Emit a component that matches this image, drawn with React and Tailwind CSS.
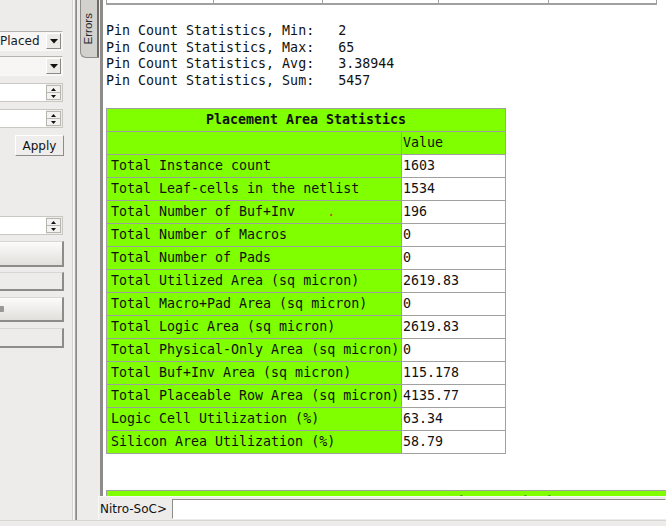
import React from "react";

const mono = { fontFamily: '"DejaVu Sans Mono", "Liberation Mono", monospace' };

const rows = [
  ["Total Instance count", "1603"],
  ["Total Leaf-cells in the netlist", "1534"],
  ["Total Number of Buf+Inv", "196", true],
  ["Total Number of Macros", "0"],
  ["Total Number of Pads", "0"],
  ["Total Utilized Area (sq micron)", "2619.83"],
  ["Total Macro+Pad Area (sq micron)", "0"],
  ["Total Logic Area (sq micron)", "2619.83"],
  ["Total Physical-Only Area (sq micron)", "0"],
  ["Total Buf+Inv Area (sq micron)", "115.178"],
  ["Total Placeable Row Area (sq micron)", "4135.77"],
  ["Logic Cell Utilization (%)", "63.34"],
  ["Silicon Area Utilization (%)", "58.79"],
];

function DownArrow() {
  return (
    <svg width="8" height="5" viewBox="0 0 8 5">
      <path d="M0 0 H8 L4 4.5 Z" fill="#111" />
    </svg>
  );
}

function Combo({ text }) {
  return (
    <div className="flex h-[20px] w-[63px] items-center border border-l-0 border-t-[#b5b3ae] border-r-[#f8f8f7] border-b-[#f8f8f7] bg-[#f7f6f5]">
      <div className="flex-1 overflow-hidden whitespace-nowrap pl-0 text-[12px] leading-none text-[#1a1a1a] [direction:rtl] text-left">
        <span className="[direction:ltr]">{text}</span>
      </div>
      <div className="mr-[1px] flex h-[16px] w-[15px] items-center justify-center border border-t-white border-l-white border-r-[#8c8a86] border-b-[#8c8a86] bg-[#ebeae7]">
        <DownArrow />
      </div>
    </div>
  );
}

function Spin() {
  return (
    <div className="flex h-[19px] w-[63px] items-stretch border border-l-0 border-[#c9c7c2] bg-white">
      <div className="flex-1" />
      <div className="flex w-[16px] flex-col bg-[#edeceb] py-[1px] pr-[1px]">
        <div className="flex flex-1 items-center justify-center border border-[#b8b6b1] bg-[#f3f2f0]">
          <svg width="5" height="3" viewBox="0 0 5 3"><path d="M0 3 L2.5 0 L5 3 Z" fill="#111" /></svg>
        </div>
        <div className="flex flex-1 items-center justify-center border border-t-0 border-[#b8b6b1] bg-[#f3f2f0]">
          <svg width="5" height="3" viewBox="0 0 5 3"><path d="M0 0 H5 L2.5 3 Z" fill="#111" /></svg>
        </div>
      </div>
    </div>
  );
}

function BigButton({ h, grad, icon }) {
  return (
    <div
      className={`flex w-[64px] items-center border-t border-t-[#d8d6d1] border-r-2 border-b-2 border-r-[#8e8c88] border-b-[#8e8c88] ${h} ${
        grad ? "bg-gradient-to-b from-[#fbfbfa] to-[#e2e0dc]" : "bg-[#edeceb]"
      }`}
    >
      {icon && <div className="h-[6px] w-[4px] rounded-r-[1px] bg-[#9a9894]" />}
    </div>
  );
}

export default function App() {
  return (
    <div
      className="flex h-[526px] w-[666px] flex-col overflow-hidden bg-[#edeceb]"
      style={{ fontFamily: '"DejaVu Sans", "Liberation Sans", sans-serif' }}
    >
      <div className="flex h-[520px]">
        {/* left panel */}
        <div className="flex w-[72px] flex-col overflow-hidden">
          <div className="h-[31px]" />
          <Combo text="Placed" />
          <div className="h-[5px]" />
          <Combo text="" />
          <div className="h-[7px]" />
          <Spin />
          <div className="h-[7px]" />
          <Spin />
          <div className="h-[7px]" />
          <div className="ml-[15px] flex h-[21px] w-[49px] items-center justify-center border border-t-white border-l-white border-r-[#8e8c88] border-b-[#8e8c88] bg-[#efeeec] text-[12px] text-[#111]">
            Apply
          </div>
          <div className="h-[60px]" />
          <Spin />
          <div className="h-[6px]" />
          <BigButton h="h-[26px]" grad />
          <div className="h-[5px]" />
          <BigButton h="h-[19px]" />
          <div className="h-[6px]" />
          <BigButton h="h-[25px]" grad icon />
          <div className="h-[6px]" />
          <BigButton h="h-[20px]" />
        </div>
        {/* separator */}
        <div className="flex w-[6px]">
          <div className="w-[1px] bg-[#d4d2ce]" />
          <div className="w-[1px] bg-[#fbfbfa]" />
          <div className="w-[1px]" />
          <div className="w-[1px] bg-[#a8a6a2]" />
          <div className="w-[1px] bg-[#8e8c88]" />
        </div>
        {/* right area */}
        <div className="flex min-w-0 flex-1 flex-col">
          <div className="flex h-[496px]">
            {/* tab column */}
            <div className="flex w-[22px] flex-col">
              <div className="ml-[2px] flex h-[58px] w-[19px] items-center justify-center rounded-bl-[6px] border border-r-2 border-[#8e8c88] border-t-0 border-r-[#6e6c68] bg-[#d3d1cd]">
                <span
                  className="inline-block -rotate-90 whitespace-nowrap text-[11.5px] leading-none text-[#2a2a2a]"
                  style={{ fontFamily: '"Liberation Sans", sans-serif' }}
                >
                  Errors
                </span>
              </div>
            </div>
            {/* content frame */}
            <div className="min-w-0 flex-1 overflow-hidden border-l-[3px] border-l-[#8e8c88] bg-white pl-[3px]" style={mono}>
              {/* scrolled table bottom */}
              <div className="flex h-[5px] w-[551px] border-b-2 border-x border-[#a0a0a0]">
                <div className="w-[107px] border-r border-[#a0a0a0]" />
                <div className="w-[109px] border-r border-[#a0a0a0]" />
                <div className="w-[116px] border-r border-[#a0a0a0]" />
                <div className="w-[110px] border-r border-[#a0a0a0]" />
                <div className="flex-1" />
              </div>
              <div className="pt-[18px] text-[13.3px] leading-[16.67px] text-[#111] whitespace-pre">
                <div>{"Pin Count Statistics, Min:   2"}</div>
                <div>{"Pin Count Statistics, Max:   65"}</div>
                <div>{"Pin Count Statistics, Avg:   3.38944"}</div>
                <div>{"Pin Count Statistics, Sum:   5457"}</div>
              </div>
              <div className="h-[18px]" />
              <table className="w-[400px] border-collapse border border-[#8a8a8a] text-[13.3px] text-[#111]">
                <tbody>
                  <tr className="h-[23px]">
                    <td colSpan={2} className="border border-[#a0a0a0] bg-[#7fff00] p-0 text-center font-bold leading-[21px]">
                      Placement Area Statistics
                    </td>
                  </tr>
                  <tr className="h-[23px]">
                    <td className="w-[295px] border border-[#a0a0a0] bg-[#7fff00] p-0" />
                    <td className="border border-[#a0a0a0] bg-[#7fff00] py-0 pl-[1px] leading-[21px]">Value</td>
                  </tr>
                  {rows.map(([k, v, dot]) => (
                    <tr key={k} className="h-[23px]">
                      <td className="whitespace-pre border border-[#a0a0a0] bg-[#7fff00] py-0 pl-[4px] leading-[21px]">
                        {k}
                        {dot && (
                          <>
                            {"    "}
                            <span className="text-[#d2461e]">.</span>
                          </>
                        )}
                      </td>
                      <td className="border border-[#a0a0a0] bg-white py-0 pl-[1px] leading-[21px]">{v}</td>
                    </tr>
                  ))}
                </tbody>
              </table>
              <div className="h-[36px]" />
              <table className="w-[702px] border-collapse border border-[#8a8a8a] text-[13.3px] text-[#111]">
                <tbody>
                  <tr className="h-[23px]">
                    <td className="border border-[#a0a0a0] bg-[#7fff00] p-0 pt-[1px] text-center font-bold leading-[21px]">
                      Cell and Row Site Statistics
                    </td>
                  </tr>
                </tbody>
              </table>
            </div>
          </div>
          {/* command line */}
          <div className="flex h-[24px] items-center">
            <div className="w-[20px]" />
            <div className="flex h-[24px] flex-1 items-center border-t border-l border-[#f8f8f7] bg-[#edeceb]">
              <span className="pl-[1px] text-[12px] text-[#111]">Nitro-SoC&gt;</span>
              <div className="ml-[5px] h-[20px] flex-1 border border-t-[#8e8c88] border-l-[#8e8c88] border-r-white border-b-white bg-white" />
            </div>
          </div>
        </div>
      </div>
      <div className="h-[6px] border-t border-[#d8d6d2] bg-[#edeceb]" />
    </div>
  );
}
